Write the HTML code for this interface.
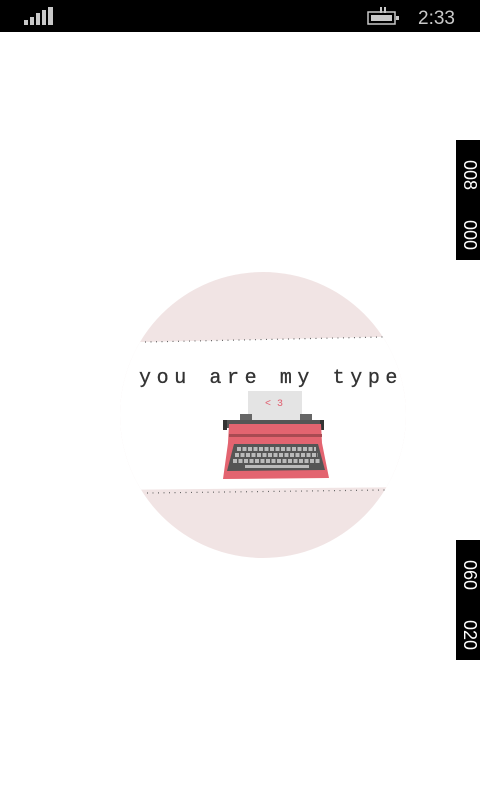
<!DOCTYPE html>
<html><head><style>
html,body{margin:0;padding:0;width:480px;height:800px;background:#fff;overflow:hidden;font-family:"Liberation Sans",sans-serif}
.sb{position:absolute;left:0;top:0;width:480px;height:32px;background:#000}
.side{position:absolute;left:456px;width:24px;height:120px;background:#000}
.side span{position:absolute;color:#fff;font-size:18px;left:3px;writing-mode:vertical-rl}
</style></head><body>
<div class="sb">
<svg width="480" height="32" style="position:absolute;left:0;top:0">
<g fill="#c8c8c8">
<rect x="24" y="20" width="4" height="5"/><rect x="30" y="17" width="4" height="8"/><rect x="36" y="13" width="4" height="12"/><rect x="42" y="10" width="4" height="15"/><rect x="48" y="7" width="5" height="18"/>
<rect x="368" y="12" width="27" height="12" fill="none" stroke="#c8c8c8" stroke-width="1.5"/>
<rect x="371" y="15" width="21" height="6"/><rect x="396" y="16" width="3" height="4"/>
<rect x="380" y="7" width="2" height="6"/><rect x="384" y="7" width="2" height="6"/>
</g>
<text x="418" y="24" fill="#c8c8c8" font-size="19" font-family="Liberation Sans">2:33</text>
</svg>
</div>
<div class="side" style="top:140px"><span style="top:20px">008</span><span style="top:80px">000</span></div>
<div class="side" style="top:540px"><span style="top:20px">060</span><span style="top:80px">020</span></div>
<svg width="480" height="800" style="position:absolute;left:0;top:0">
<defs><clipPath id="c"><circle cx="263" cy="415" r="143"/></clipPath></defs>
<g clip-path="url(#c)">
<rect x="100" y="260" width="320" height="310" fill="#f1e4e4"/>
<polygon points="100,343 420,336 420,487 100,490" fill="#fff"/>
</g>
<line x1="145" y1="342" x2="383" y2="337" stroke="#666" stroke-width="1.2" stroke-dasharray="1,4.5"/>
<line x1="147" y1="493" x2="385" y2="490" stroke="#666" stroke-width="1.2" stroke-dasharray="1,4.5"/>
<text x="139" y="383" font-family="Liberation Mono" font-size="20" letter-spacing="5.6" fill="#333" stroke="#333" stroke-width="0.3">you are my type</text>
<rect x="248" y="391" width="54" height="33" fill="#e4e4e4"/>
<text x="265" y="406" font-size="10" fill="#e06070" font-family="Liberation Mono">&lt; 3</text>
<rect x="240" y="414" width="12" height="8" fill="#666"/><rect x="300" y="414" width="12" height="8" fill="#666"/>
<rect x="226" y="420" width="98" height="8" fill="#555"/>
<rect x="223" y="420" width="4" height="10" fill="#333"/><rect x="320" y="420" width="4" height="10" fill="#333"/>
<polygon points="229,424 321,424 322,443 329,478 223,479 228,443" fill="#e36470"/>
<rect x="229" y="434" width="93" height="3" fill="#a84a52"/>
<polygon points="234,444 318,444 325,470 227,471" fill="#555"/>
<g stroke="#bbb" stroke-width="4" stroke-dasharray="4,1.5">
<line x1="237" y1="449" x2="316" y2="449"/><line x1="235" y1="455" x2="318" y2="455"/><line x1="233" y1="461" x2="320" y2="461"/>
</g>
<rect x="245" y="465" width="64" height="3" fill="#bbb"/>
</svg>
</body></html>
